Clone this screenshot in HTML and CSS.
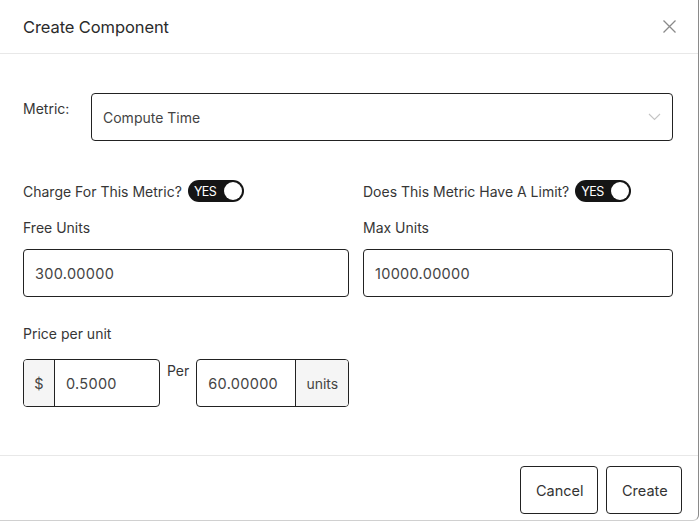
FILE: index.html
```html
<!DOCTYPE html>
<html>
<head>
<meta charset="utf-8">
<link rel="stylesheet" href="styles.css">
</head>
<body>
<div class="modal">
  <div class="modal-header">
    <h1 class="title">Create Component</h1>
    <button class="close" aria-label="Close">
      <svg width="13" height="13" viewBox="0 0 13 13"><path d="M0.5 0.5L12.5 12.5M12.5 0.5L0.5 12.5" stroke="#8a8a8a" stroke-width="1.3" fill="none"/></svg>
    </button>
  </div>
  <div class="modal-body">
    <div class="metric-row">
      <label class="metric-label">Metric:</label>
      <div class="select">
        <span>Compute Time</span>
        <svg class="chev" width="13" height="8" viewBox="0 0 13 8"><path d="M1 1L6.5 6.5L12 1" stroke="#c4c4c4" stroke-width="1.1" fill="none"/></svg>
      </div>
    </div>
    <div class="grid">
      <div class="col">
        <div class="toggle-row">
          <span>Charge For This Metric?</span>
          <span class="toggle"><span class="yes">YES</span><span class="knob"></span></span>
        </div>
        <div class="field-label">Free Units</div>
        <div class="input">300.00000</div>
      </div>
      <div class="col">
        <div class="toggle-row">
          <span>Does This Metric Have A Limit?</span>
          <span class="toggle"><span class="yes">YES</span><span class="knob"></span></span>
        </div>
        <div class="field-label">Max Units</div>
        <div class="input">10000.00000</div>
      </div>
    </div>
    <div class="field-label price-label">Price per unit</div>
    <div class="price-row">
      <div class="group group-price">
        <span class="addon addon-left">$</span>
        <span class="gval">0.5000</span>
      </div>
      <span class="per">Per</span>
      <div class="group group-units">
        <span class="gval">60.00000</span>
        <span class="addon addon-right">units</span>
      </div>
    </div>
  </div>
  <div class="modal-footer">
    <button class="btn btn-cancel">Cancel</button>
    <button class="btn btn-create">Create</button>
  </div>
</div>
</body>
</html>
```
FILE: styles.css
```css
* { box-sizing: border-box; }
html, body { margin: 0; padding: 0; background: #fff; }
body {
  font-family: Inter, "Liberation Sans", sans-serif;
  color: #363636;
  font-size: 14px;
}
.modal {
  width: 699px;
  height: 521px;
  border-right: 1px solid #8a8a8a;
  border-bottom: 1px solid #d0d0d0;
  border-bottom-right-radius: 6px;
  background: #fff;
  display: flex;
  flex-direction: column;
}
.modal-header {
  height: 54px;
  border-bottom: 1px solid #e8e8e8;
  display: flex;
  align-items: center;
  justify-content: space-between;
  padding: 0 22px 0 23px;
}
.title {
  margin: 0;
  font-size: 16.5px;
  font-weight: 400;
  color: #2b2b2b;
  letter-spacing: -0.1px;
}
.close {
  border: 0;
  background: none;
  padding: 0;
  width: 13px;
  height: 13px;
  display: flex;
}
.modal-body {
  flex: 1;
  padding: 39px 25px 0 23px;
}
.metric-row {
  display: flex;
  align-items: flex-start;
}
.metric-label {
  width: 68px;
  padding-top: 7px;
  font-size: 14px;
}
.select {
  flex: 1;
  height: 48px;
  border: 1px solid #222;
  border-radius: 4px;
  display: flex;
  align-items: center;
  justify-content: space-between;
  padding: 0 11px;
  color: #444;
}
.grid {
  display: grid;
  grid-template-columns: 326px 1fr;
  column-gap: 14px;
  margin-top: 39px;
}
.toggle-row {
  display: flex;
  align-items: center;
  height: 22px;
  gap: 6px;
}
.toggle {
  width: 56px;
  height: 22px;
  border-radius: 11px;
  background: #151515;
  display: flex;
  align-items: center;
  justify-content: space-between;
  padding: 0 2px 0 6px;
}
.yes {
  color: #fff;
  font-size: 12.5px;
  letter-spacing: -0.5px;
}
.knob {
  width: 18px;
  height: 18px;
  border-radius: 50%;
  background: #fff;
}
.field-label {
  margin-top: 17px;
  font-size: 14px;
  height: 17px;
  line-height: 17px;
}
.input {
  margin-top: 13px;
  height: 48px;
  border: 1px solid #222;
  border-radius: 4px;
  display: flex;
  align-items: center;
  padding: 0 11px;
  font-size: 14.5px;
  color: #444;
  letter-spacing: 0.3px;
}
.price-label { margin-top: 28px; }
.price-row {
  display: flex;
  align-items: flex-start;
  margin-top: 17px;
}
.group {
  height: 48px;
  border: 1px solid #222;
  border-radius: 4px;
  display: flex;
  overflow: hidden;
  font-size: 14.5px;
  color: #444;
}
.group-price { width: 137px; }
.group-units { width: 153px; }
.addon {
  background: #f5f5f5;
  display: flex;
  align-items: center;
  justify-content: center;
}
.addon-left { width: 31px; border-right: 1px solid #222; }
.addon-right { flex: 1; border-left: 1px solid #222; font-size: 14px; }
.gval {
  display: flex;
  align-items: center;
  padding: 0 11px;
  letter-spacing: 0.3px;
}
.group-units .gval { width: 98px; }
.per {
  margin: 3px 7px 0 7px;
  font-size: 14px;
}
.modal-footer {
  height: 65px;
  border-top: 1px solid #e8e8e8;
  display: flex;
  justify-content: flex-end;
  align-items: flex-start;
  gap: 8px;
  padding: 10px 16px 0 0;
}
.btn {
  height: 48px;
  border: 1px solid #222;
  border-radius: 4px;
  background: #fff;
  font-family: inherit;
  font-size: 14.5px;
  color: #333;
  padding: 0 15px;
}
.btn-cancel { width: 78px; }
.btn-create { width: 76px; }
```
